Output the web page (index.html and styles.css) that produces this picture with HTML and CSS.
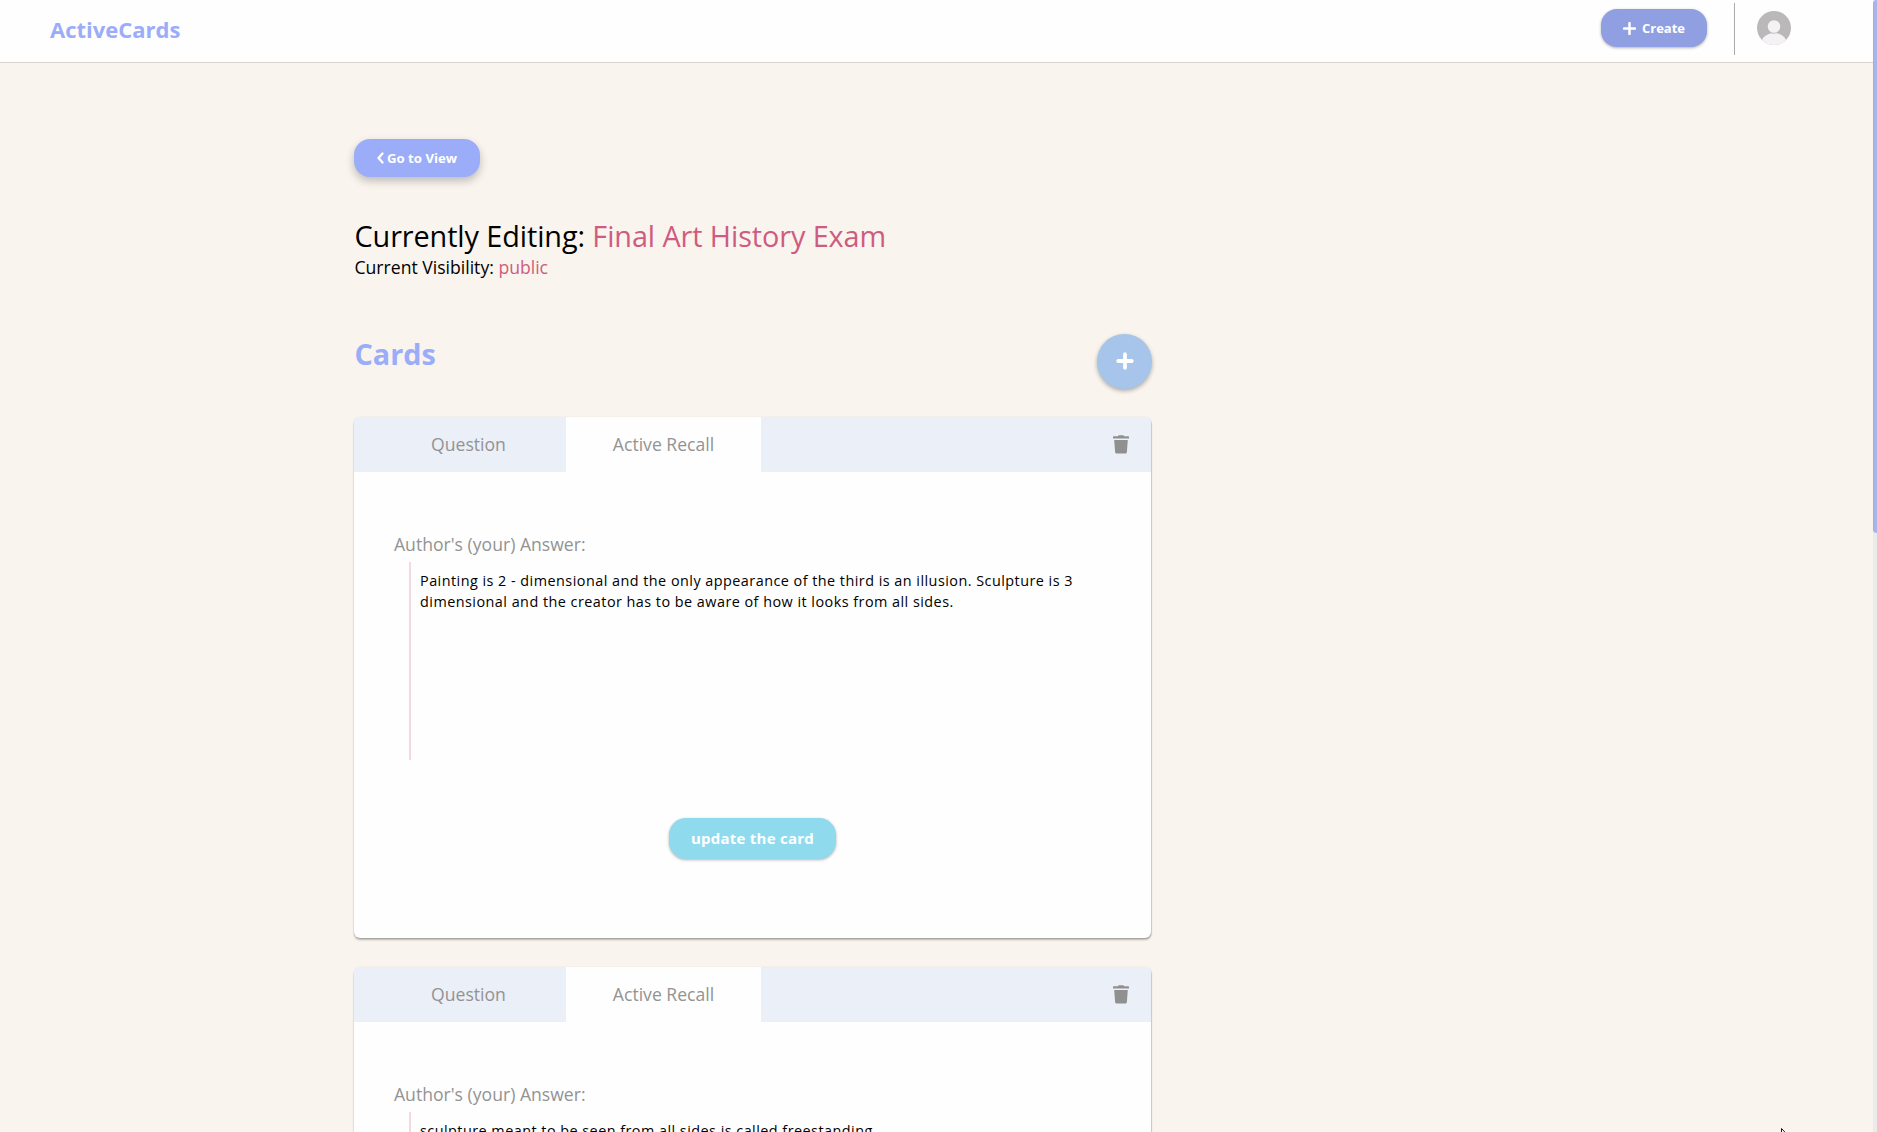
FILE: index.html
```html
<!DOCTYPE html>
<html lang="en">
<head>
<meta charset="utf-8">
<title>ActiveCards</title>
<link rel="stylesheet" href="styles.css">
</head>
<body>
<header class="topbar">
  <a class="logo">ActiveCards</a>
  <div class="actions">
    <button class="btn create"><svg class="plus" viewBox="0 0 12 12"><path d="M6 1v10M1 6h10"/></svg><span>Create</span></button>
    <span class="divider"></span>
    <svg class="avatar" viewBox="0 0 34 34"><defs><clipPath id="disc"><circle cx="17" cy="17" r="17"/></clipPath></defs><g clip-path="url(#disc)"><path fill="#bab8b9" d="M0 0h34v34H0z"/><ellipse cx="17" cy="32" rx="12.6" ry="10" fill="#f4f2f5"/><circle cx="17" cy="15.5" r="7.2" fill="#bab8b9"/><circle cx="17" cy="15.5" r="6.3" fill="#f4f2f5"/></g></svg>
  </div>
</header>
<main class="editor">
  <button class="btn back"><svg class="chevron" viewBox="0 0 7 12"><path d="M5.5 1.500 1.600 6l3.900 4.500"/></svg><span>Go to View</span></button>
  <h1 class="title">Currently Editing: <span class="accent">Final Art History Exam</span></h1>
  <p class="visibility">Current Visibility: <span class="accent">public</span></p>
  <div class="section-head">
    <h2 class="section-title">Cards</h2>
    <button class="fab"><svg class="fab-plus" viewBox="0 0 18 18"><path d="M9 2.200v13.600M2.200 9h13.600"/></svg></button>
  </div>
  <article class="card">
    <nav class="tabs">
      <span class="tab question">Question</span><span class="tab active">Active Recall</span>
      <svg class="trash" viewBox="0 0 16 19"><path d="M5 1.2 5.6.3h4.8l.6.9h4.4q.6 0 .6.6v1.6H0V1.800q0-.6.6-.6zM1.200 5h13.600l-.9 12q-.1 1.500-1.600 1.500H3.700q-1.500 0-1.600-1.500z"/></svg>
    </nav>
    <div class="card-body">
      <h3 class="label">Author's (your) Answer:</h3>
      <p class="answer">Painting is 2 - dimensional and the only appearance of the third is an illusion. Sculpture is 3 dimensional and the creator has to be aware of how it looks from all sides.</p>
      <button class="update">update the card</button>
    </div>
  </article>
  <article class="card">
    <nav class="tabs">
      <span class="tab question">Question</span><span class="tab active">Active Recall</span>
      <svg class="trash" viewBox="0 0 16 19"><path d="M5 1.2 5.6.3h4.8l.6.9h4.4q.6 0 .6.6v1.6H0V1.800q0-.6.6-.6zM1.200 5h13.600l-.9 12q-.1 1.500-1.600 1.500H3.700q-1.500 0-1.600-1.500z"/></svg>
    </nav>
    <div class="card-body">
      <h3 class="label">Author's (your) Answer:</h3>
      <p class="answer">sculpture meant to be seen from all sides is called freestanding</p>
    </div>
  </article>
</main>
<div class="scroll-track"><div class="scroll-thumb"></div></div>
<svg class="cursor" viewBox="0 0 12 18"><path d="M.5.500v15l3.500-3.300 2.300 5 2-.9-2.300-4.800h5z" fill="#fff" stroke="#15152e"/></svg>
</body>
</html>
```
FILE: styles.css
```css
* { box-sizing: border-box; margin: 0; padding: 0; }
html, body { height: 1132px; overflow: hidden; }
body { position: relative; background: #f9f4ee; color: #000; font-family: "Open Sans", sans-serif; }
button { border: 0; color: #fff; font-family: inherit; }

.topbar { display: flex; justify-content: space-between; height: 63px; padding: 0 86px 0 50px; background: #fefefe; border-bottom: 1px solid #d8d3cf; }
.logo { padding-top: 13px; font-size: 22px; line-height: 32px; font-weight: 700; color: #9badf8; }
.actions { display: flex; align-items: flex-start; }
.btn { display: flex; align-items: center; justify-content: center; height: 38px; border-radius: 16px; font-size: 13px; font-weight: 700; }
.btn svg { fill: none; stroke: #fff; }
.create { gap: 6px; width: 106px; margin-top: 9px; background: #909fe2; box-shadow: 0 1px 3px rgba(0,0,0,.3); }
.plus { width: 13px; height: 13px; stroke-width: 2.3; stroke-linecap: round; }
.divider { width: 1px; height: 52px; margin: 3px 22px 0 27px; background: #aaa; }
.avatar { width: 34px; height: 34px; margin-top: 11px; }

.editor { display: flex; flex-direction: column; width: 797px; margin: 76px 0 0 354px; }
.back { gap: 3px; width: 126px; background: #9badf9; font-size: 13.2px; box-shadow: 0 4px 8px rgba(0,0,0,.24); }
.chevron { width: 7px; height: 12px; stroke-width: 2.3; stroke-linecap: round; }
.title { margin-top: 39px; padding-left: .5px; font-size: 28.8px; line-height: 40px; font-weight: 400; letter-spacing: -.08px; white-space: nowrap; }
.visibility { padding-left: .5px; font-size: 17.6px; line-height: 22px; }
.accent { color: #cf5c80; }
.section-head { display: flex; justify-content: space-between; height: 55px; margin-top: 56px; }
.section-title { padding-left: .5px; font-size: 28.8px; line-height: 40px; color: #9badf8; }
.fab { display: flex; align-items: center; justify-content: center; width: 55px; height: 55px; margin-right: -1px; padding-bottom: 1px; border-radius: 50%; background: #a7c4eb; box-shadow: 0 2px 4px rgba(0,0,0,.3); }
.fab-plus { width: 18px; height: 18px; fill: none; stroke: #fff; stroke-width: 3.8; stroke-linecap: round; }

.card { height: 521px; margin-top: 28px; border-radius: 6px; overflow: hidden; background: #fefefe; box-shadow: 0 2px 2px rgba(0,0,0,.25), 0 0 1px rgba(0,0,0,.2), 1px 1px 1px rgba(0,0,0,.1); flex-shrink: 0; }
.card + .card { height: 165px; margin-top: 29px; border-radius: 6px 6px 0 0; }
.tabs { display: flex; align-items: center; height: 55px; padding-right: 22px; background: #ebeff8; }
.tab { height: 55px; font-size: 17.6px; line-height: 54px; text-align: center; color: #939393; }
.question { width: 212px; padding-left: 17px; }
.active { width: 195px; background: #fefefe; }
.trash { width: 16px; height: 19px; margin-left: auto; fill: #909090; }
.card-body { display: flex; flex-direction: column; padding: 60px 40px 0; }
.label { font-size: 17.6px; line-height: 24px; font-weight: 400; color: #939393; }
.answer { height: 198px; margin: 6px 0 0 15px; padding: 8px 20px 0 9px; border-left: 2px solid #f3dae2; font-size: 14.4px; line-height: 21px; letter-spacing: .47px; }
.update { width: 167px; height: 41px; margin-top: 58px; padding-bottom: 1px; align-self: center; border-radius: 17px; background: #8fdbed; font-size: 15px; font-weight: 700; letter-spacing: .25px; box-shadow: 0 1px 3px rgba(0,0,0,.3); }

/* Page scrollbar and pointer lie over the page */
.scroll-track { position: absolute; top: 0; right: 0; width: 4px; height: 100%; background: #ebebeb; }
.scroll-thumb { height: 533px; border-left: 1px solid #9badf9; border-radius: 4px 0 0 4px; background: #a9b4e8; }
.cursor { position: absolute; left: 1781px; top: 1128px; width: 12px; height: 18px; }
```
